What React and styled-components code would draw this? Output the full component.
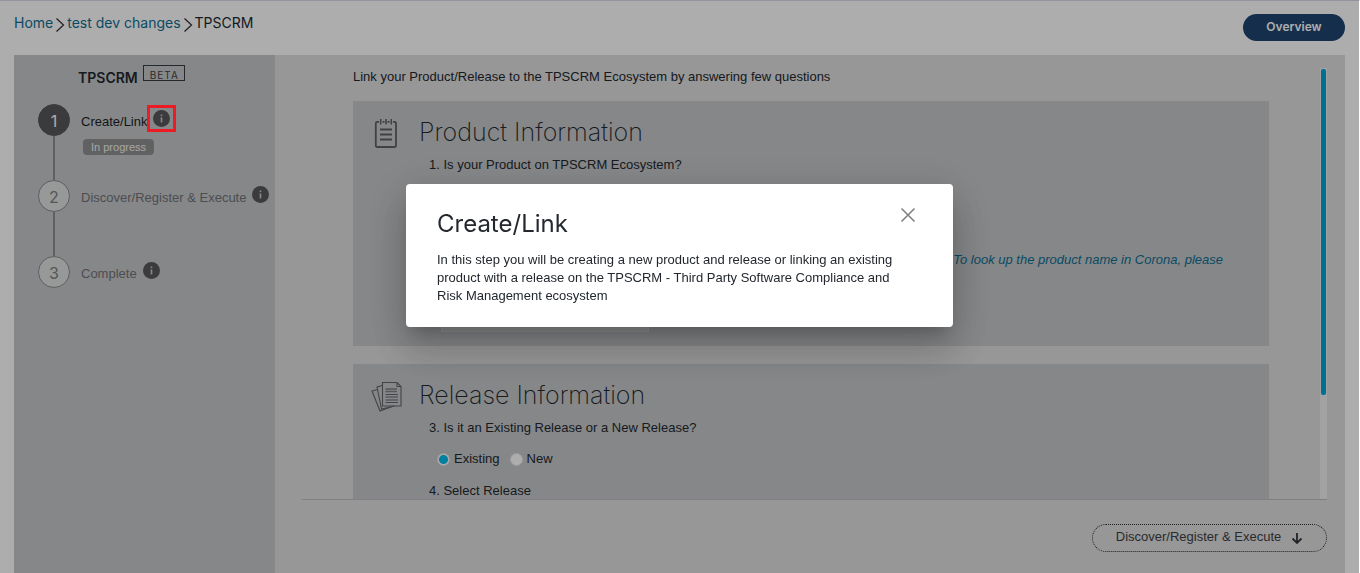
import React from "react";
import styled, { createGlobalStyle, css } from "styled-components";

const displayFont = `Inter, "Liberation Sans", sans-serif`;

const GlobalStyle = createGlobalStyle`
  *, *::before, *::after { box-sizing: border-box; }
  body {
    margin: 0;
    background: #fff;
    color: #23282e;
    font-family: "Liberation Sans", Arial, sans-serif;
    font-size: 13px;
    line-height: 18px;
  }
  h1, h2, h3, p, ol, ul, fieldset { margin: 0; padding: 0; border: 0; }
  h1, h2 { font-family: ${displayFont}; }
  ol, ul { list-style: none; }
  button, select, input { font: inherit; margin: 0; }
`;

const Page = styled.div`
  display: flex;
  flex-direction: column;
  height: 100vh;
  padding: 0 15px 0 14px;
  border-top: 1px solid #dcdbe6;
`;

const Header = styled.header`
  display: flex;
  justify-content: space-between;
  align-items: flex-start;
  padding: 13px 0 14px;
`;

const Crumbs = styled.nav`
  display: flex;
  align-items: flex-start;
  font-family: ${displayFont};
  font-size: 14px;
  svg { margin: 3px 2px 0; }
`;

const CrumbLink = styled.a`
  color: #0f6f93;
  text-decoration: none;
`;

const PrimaryButton = styled.button`
  width: 102px;
  height: 27px;
  border: 0;
  border-radius: 14px;
  background: #1e4471;
  color: #fff;
  font-family: ${displayFont};
  font-size: 12px;
  font-weight: 600;
  line-height: 24px;
  padding: 0 0 2px;
`;

const Workspace = styled.div`
  display: flex;
  flex: 1;
  min-height: 0;
  background: #dfdfdf;
`;

const Sidebar = styled.aside`
  flex: 0 0 261px;
  padding: 10px 0 0 24px;
  background: #c6c8ca;
`;

const SidebarTitle = styled.div`
  display: flex;
  align-items: flex-start;
  gap: 5px;
  padding-left: 40px;
  margin-bottom: 14px;
  h1 { font-size: 14px; font-weight: 600; line-height: 25px; }
`;

const BetaTag = styled.span`
  padding: 3px 5px 0 6px;
  height: 16px;
  border: 1px solid #3a3c40;
  color: #3f4145;
  font-family: ${displayFont};
  font-size: 10px;
  line-height: 13px;
  letter-spacing: 1px;
`;

const StepItem = styled.li`
  display: grid;
  grid-template-columns: 32px 1fr;
  column-gap: 11px;
  min-height: ${(p) => (p.$last ? "32px" : "76px")};
  color: ${(p) => (p.$active ? "#1c1e22" : "#707276")};
`;

const Rail = styled.div`
  display: flex;
  flex-direction: column;
  align-items: center;
`;

const StepNumber = styled.span`
  width: 32px;
  height: 32px;
  border-radius: 50%;
  border: 1px solid #8a8c8f;
  background: #dfe0e1;
  color: #7d7f82;
  font-family: ${displayFont};
  font-size: 16px;
  line-height: 32px;
  text-align: center;
  ${(p) =>
    p.$active &&
    css`
      border-color: #58585b;
      background: #58585b;
      color: #fff;
    `}
`;

const Connector = styled.span`
  flex: 1;
  width: 2px;
  background: #8f9093;
`;

const StepHeading = styled.div`
  display: flex;
  align-items: flex-start;
  gap: 6px;
  padding-top: 6px;
  white-space: nowrap;
  > span { padding-top: 3px; }
`;

const InfoButton = styled.button`
  position: relative;
  display: flex;
  padding: 0;
  border: 0;
  background: none;
`;

const Highlight = styled.span`
  position: absolute;
  z-index: 20;
  inset: -5px -6px;
  border: 3px solid #ed1c24;
`;

const StatusBadge = styled.span`
  display: inline-block;
  margin: 8px 0 0 2px;
  padding: 0 8px;
  border-radius: 4px;
  background: #909090;
  color: #f4f4f4;
  font-size: 11px;
  line-height: 16px;
`;

const Main = styled.main`
  display: flex;
  flex-direction: column;
  flex: 1;
  min-width: 0;
  padding: 13px 18px 0 27px;
`;

const ScrollArea = styled.div`
  display: flex;
  flex: 1;
  min-height: 0;
  border-bottom: 1px solid #bcbcbe;
`;

const ScrollContent = styled.div`
  display: flex;
  flex-direction: column;
  flex: 1;
  min-width: 0;
  overflow: hidden;
  padding: 0 51px;
`;

const Track = styled.div`
  flex: 0 0 7px;
  padding: 1px;
  background: #efefef;
`;

const Thumb = styled.div`
  height: 76%;
  border-radius: 2px;
  background: #00a4d6;
`;

const Intro = styled.p`
  flex: none;
  line-height: 17px;
  margin-bottom: 16px;
`;

const Card = styled.section`
  display: grid;
  grid-template-columns: 66px 1fr;
  flex: none;
  min-height: 245px;
  margin-bottom: 18px;
  padding: 16px 0 14px;
  background: #c6c8ca;
`;

const CardIcon = styled.div`
  display: flex;
  justify-content: center;
  align-items: flex-start;
  padding-top: 1px;
`;

const CardBody = styled.div`
  display: flex;
  flex-direction: column;
`;

const CardTitle = styled.h2`
  font-size: 25px;
  font-weight: 200;
  line-height: 31px;
  margin-bottom: 8px;
`;

const Question = styled.p`
  padding-left: 10px;
`;

const Hint = styled.p`
  margin-top: 77px;
  padding-right: 46px;
  color: #0f6f93;
  font-style: italic;
  text-align: right;
`;

const ProductSelect = styled.select`
  width: 208px;
  height: 28px;
  margin: auto 0 0 22px;
  border: 1px solid #e0e0e0;
  background: #d6d7d8;
`;

const RadioGroup = styled.fieldset`
  display: flex;
  gap: 10px;
  padding: 13px 0 14px 18px;
`;

const RadioLabel = styled.label`
  display: flex;
  align-items: center;
  gap: 4px;
`;

const Radio = styled.input`
  appearance: none;
  width: 13px;
  height: 13px;
  border: 1px solid #e6e6e6;
  border-radius: 50%;
  background: #fff;
  &:checked {
    background: radial-gradient(circle, #00bceb 0 4px, #fff 5px);
  }
`;

const Footer = styled.footer`
  display: flex;
  justify-content: flex-end;
  padding: 24px 0 21px;
`;

const NextButton = styled.button`
  display: flex;
  align-items: center;
  justify-content: center;
  gap: 10px;
  width: 235px;
  height: 28px;
  padding: 0;
  border: 1px dotted #2c2e33;
  border-radius: 14px;
  background: none;
  color: #3c3e44;
  span { padding-bottom: 2px; }
`;

const Backdrop = styled.div`
  position: fixed;
  z-index: 10;
  inset: 0 1px 0 0;
  display: flex;
  justify-content: center;
  align-items: flex-start;
  padding-top: 184px;
  background: rgba(0, 0, 0, 0.32);
`;

const Dialog = styled.div`
  width: 547px;
  padding: 22px 31px;
  border-radius: 4px;
  background: #fff;
  box-shadow: 0 11px 15px -7px rgba(0, 0, 0, 0.2),
    0 24px 38px 3px rgba(0, 0, 0, 0.14), 0 9px 46px 8px rgba(0, 0, 0, 0.12);
`;

const DialogHead = styled.div`
  display: flex;
  justify-content: space-between;
  align-items: flex-start;
  margin-bottom: 9px;
  h2 { font-size: 24px; font-weight: 400; line-height: 36px; }
`;

const DialogText = styled.p`
  padding-right: 16px;
`;

const CloseButton = styled.button`
  display: flex;
  margin-right: 6px;
  padding: 1px 0 0;
  border: 0;
  background: none;
`;

function Chevron() {
  return (
    <svg width="10" height="16" viewBox="0 0 10 16" fill="none" stroke="#33363b" strokeWidth="1.3" aria-hidden="true">
      <path d="M1.5 1.5 8.5 8 1.5 14.5" />
    </svg>
  );
}

function InfoIcon() {
  return (
    <svg width="17" height="17" viewBox="0 0 17 17" aria-hidden="true">
      <circle cx="8.5" cy="8.5" r="8.5" fill="#58585b" />
      <rect x="7.7" y="4.5" width="1.6" height="1.6" fill="#c6c8ca" />
      <path d="M7.3 7.4h2v5.2H7.7V8.3h-.4z" fill="#c6c8ca" />
    </svg>
  );
}

function NotepadIcon() {
  return (
    <svg width="24" height="30" viewBox="0 0 24 30" fill="none" stroke="#5e6064" strokeWidth="1.8" aria-hidden="true">
      <path d="M5 3.8H3.2a1.4 1.4 0 0 0-1.400 1.4v22.400A1.4 1.4 0 0 0 3.2 29h17.400a1.4 1.4 0 0 0 1.400-1.400V5.200a1.4 1.4 0 0 0-1.400-1.400H19M8.500 3.800h2M13.500 3.800h2" />
      <path d="M6.700 1v5.500M12 1v5.500M17.300 1v5.500" strokeWidth="1.500" />
      <path d="M6 11.500h12M6 16.500h12M6 21.500h12" />
    </svg>
  );
}

function DocumentsIcon() {
  return (
    <svg width="31" height="31" viewBox="0 0 31 31" fill="none" stroke="#63656a" strokeWidth="1.1" aria-hidden="true">
      <path d="M11.500 1.500h14.500l4 4V25H11.500zM26 1.500v4h4" />
      <path d="M11.500 4.500 6 6l4.500 22 13-3" />
      <path d="M6.500 8.500 1 10l8 20 12-4.500" />
      <path d="M14.500 8h11.500M14.500 10.500h11.500" stroke="#7d7f83" strokeWidth="1.6" />
      <path d="M14.500 13.500h12.500M14.500 16h12.500M14.500 19h12.500M14.500 21.500h12.500" />
    </svg>
  );
}

function ArrowDown() {
  return (
    <svg width="12" height="12" viewBox="0 0 12 12" fill="none" stroke="#34363b" strokeWidth="1.8" aria-hidden="true">
      <path d="M6 1v9.500M1.500 6.500 6 11 10.500 6.500" />
    </svg>
  );
}

function Step({ number, label, active, last, status }) {
  return (
    <StepItem $active={active} $last={last}>
      <Rail>
        <StepNumber $active={active}>{number}</StepNumber>
        {!last && <Connector />}
      </Rail>
      <div>
        <StepHeading>
          <span>{label}</span>
          <InfoButton type="button" aria-label={`About ${label}`}>
            <InfoIcon />
            {active && <Highlight />}
          </InfoButton>
        </StepHeading>
        {status && <StatusBadge>{status}</StatusBadge>}
      </div>
    </StepItem>
  );
}

export default function App() {
  return (
    <>
      <GlobalStyle />
      <Page>
        <Header>
          <Crumbs aria-label="Breadcrumb">
            <CrumbLink href="#home">Home</CrumbLink>
            <Chevron />
            <CrumbLink href="#project">test dev changes</CrumbLink>
            <Chevron />
            <span>TPSCRM</span>
          </Crumbs>
          <PrimaryButton type="button">Overview</PrimaryButton>
        </Header>
        <Workspace>
          <Sidebar>
            <SidebarTitle>
              <h1>TPSCRM</h1>
              <BetaTag>BETA</BetaTag>
            </SidebarTitle>
            <ol>
              <Step number="1" label="Create/Link" status="In progress" active />
              <Step number="2" label="Discover/Register & Execute" />
              <Step number="3" label="Complete" last />
            </ol>
          </Sidebar>
          <Main>
            <ScrollArea>
              <ScrollContent>
                <Intro>Link your Product/Release to the TPSCRM Ecosystem by answering few questions</Intro>
                <Card>
                  <CardIcon><NotepadIcon /></CardIcon>
                  <CardBody>
                    <CardTitle>Product Information</CardTitle>
                    <Question>1. Is your Product on TPSCRM Ecosystem?</Question>
                    <Hint>To look up the product name in Corona, please</Hint>
                    <ProductSelect aria-label="Product" />
                  </CardBody>
                </Card>
                <Card>
                  <CardIcon><DocumentsIcon /></CardIcon>
                  <CardBody>
                    <CardTitle>Release Information</CardTitle>
                    <Question>3. Is it an Existing Release or a New Release?</Question>
                    <RadioGroup>
                      <RadioLabel>
                        <Radio type="radio" name="release" defaultChecked />
                        Existing
                      </RadioLabel>
                      <RadioLabel>
                        <Radio type="radio" name="release" />
                        New
                      </RadioLabel>
                    </RadioGroup>
                    <Question>4. Select Release</Question>
                  </CardBody>
                </Card>
              </ScrollContent>
              <Track><Thumb /></Track>
            </ScrollArea>
            <Footer>
              <NextButton type="button">
                <span>Discover/Register &amp; Execute</span>
                <ArrowDown />
              </NextButton>
            </Footer>
          </Main>
        </Workspace>
      </Page>
      <Backdrop>
        <Dialog role="dialog" aria-modal="true" aria-labelledby="dialog-title">
          <DialogHead>
            <h2 id="dialog-title">Create/Link</h2>
            <CloseButton type="button" aria-label="Close">
              <svg width="16" height="16" viewBox="0 0 16 16" fill="none" stroke="#7f8184" strokeWidth="1.6" aria-hidden="true">
                <path d="M1.500 1.500l13 13M14.500 1.500l-13 13" />
              </svg>
            </CloseButton>
          </DialogHead>
          <DialogText>
            In this step you will be creating a new product and release or linking an existing product with a
            release on the TPSCRM - Third Party Software Compliance and Risk Management ecosystem
          </DialogText>
        </Dialog>
      </Backdrop>
    </>
  );
}
